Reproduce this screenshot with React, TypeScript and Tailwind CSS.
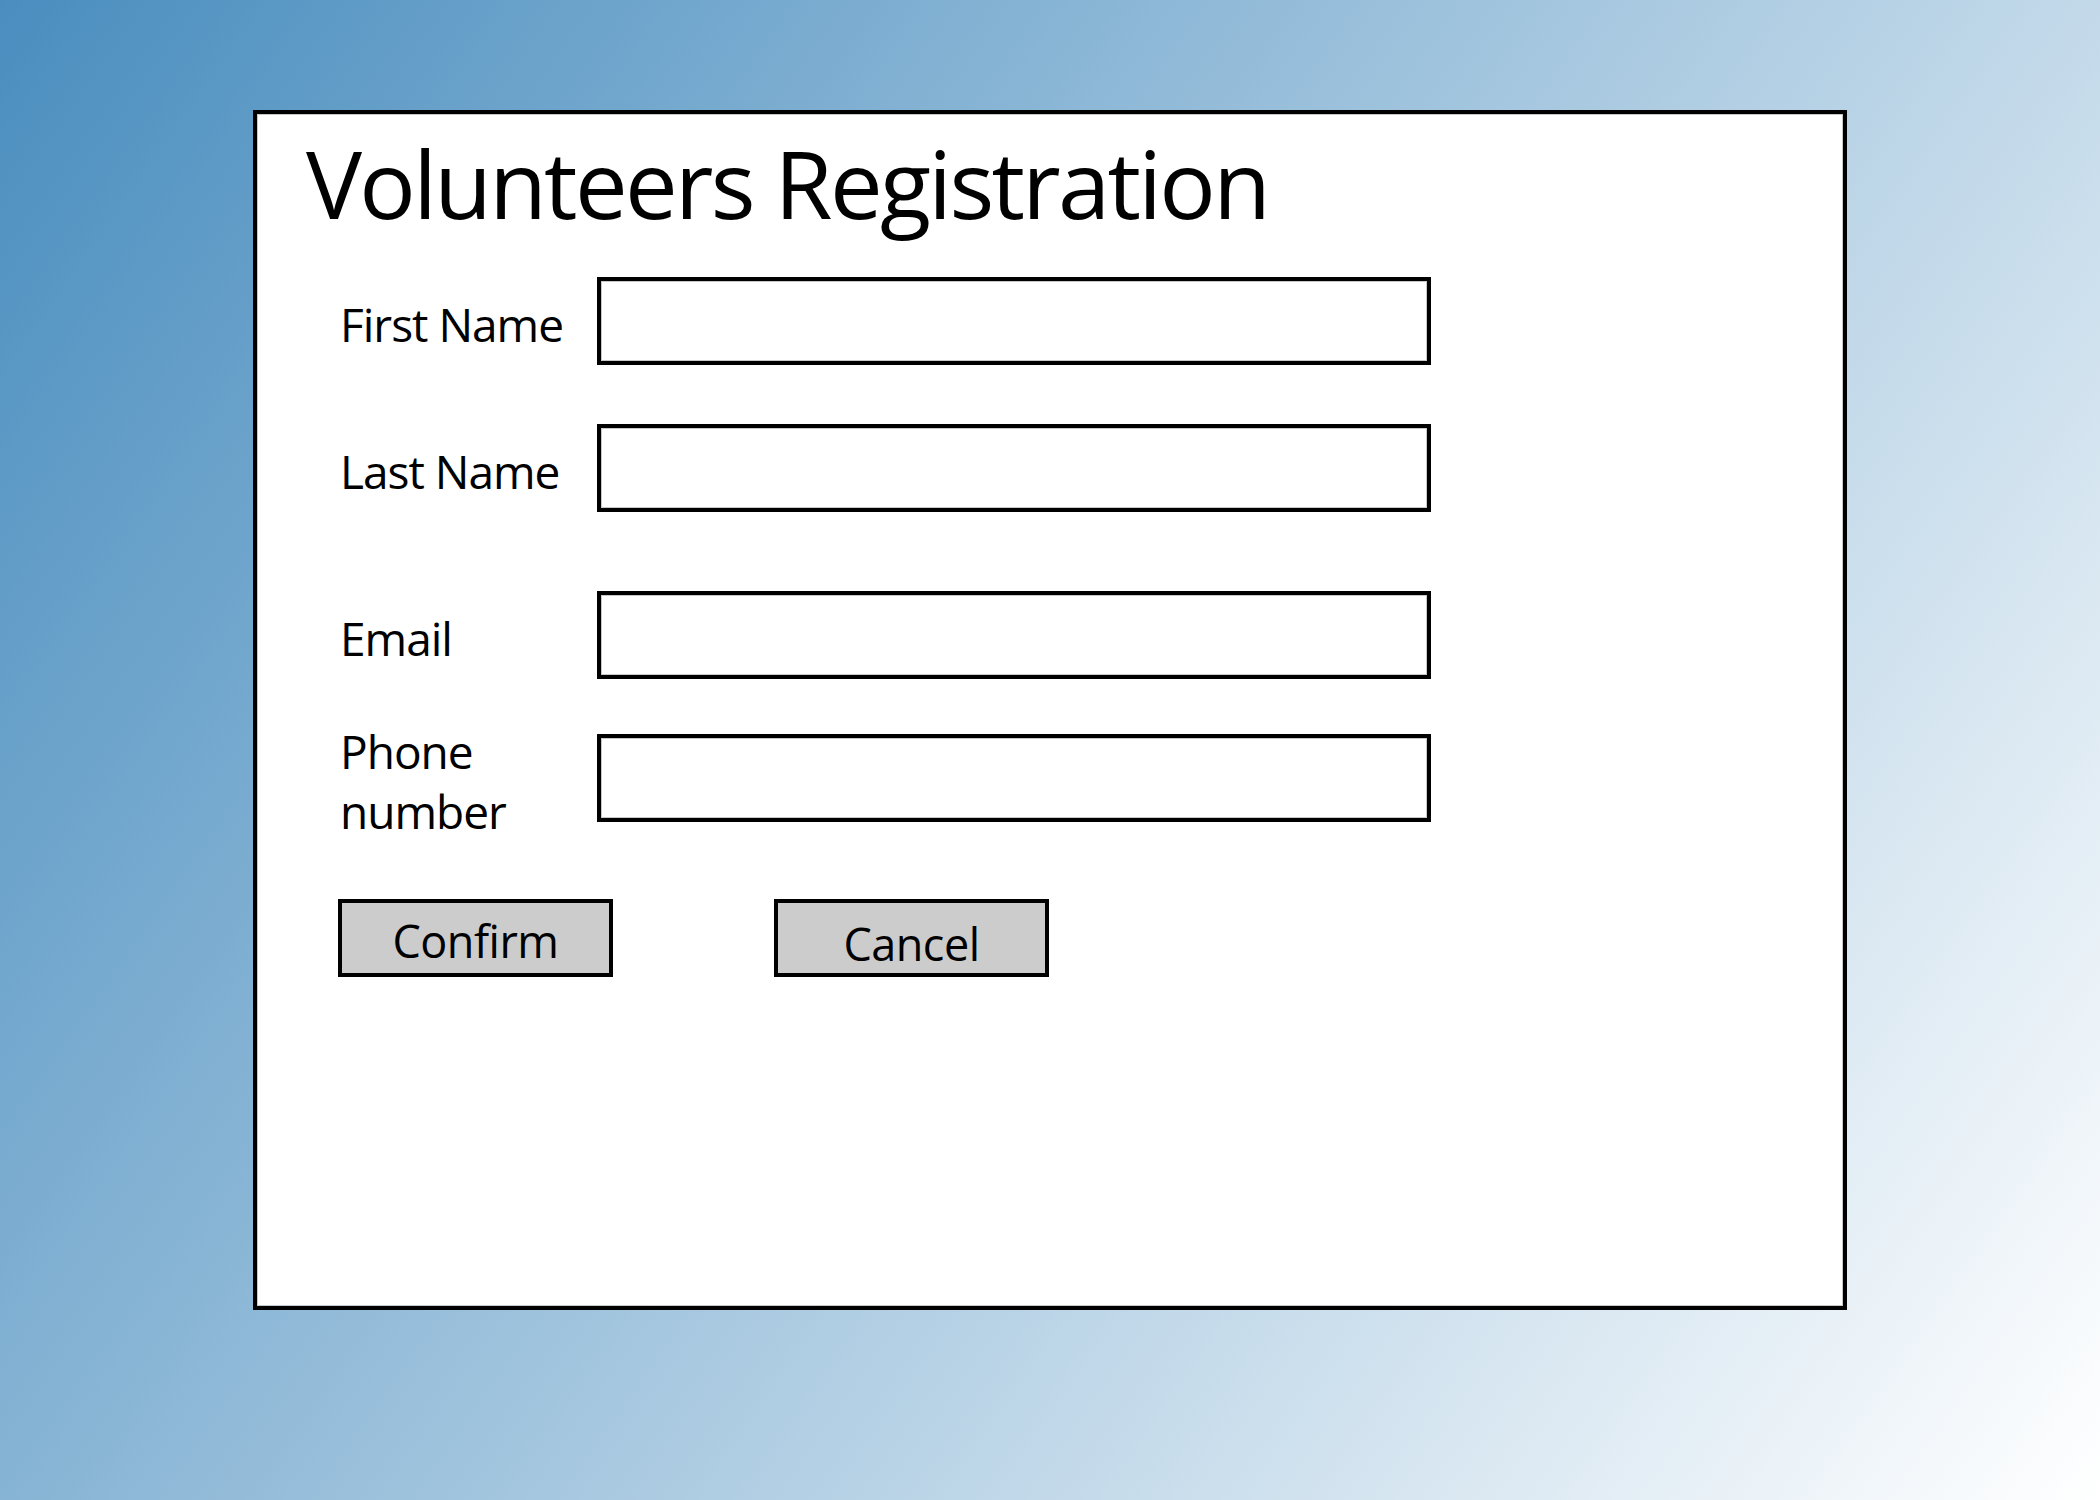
import React from 'react';

const fields = [
  { label: 'First Name', rowClass: 'mt-[48px]' },
  { label: 'Last Name', rowClass: 'mt-[59px]' },
  { label: 'Email', rowClass: 'mt-[79px]' },
  { label: 'Phone\nnumber', rowClass: 'mt-[39px]' },
];

export default function App() {
  return (
    <div className="min-h-screen w-full bg-[linear-gradient(125deg,#4a8ebf,#ffffff)] pl-[253px] pt-[110px] font-['Open_Sans',sans-serif] text-black">
      {/* Registration card */}
      <div className="h-[1200px] w-[1594px] border-4 border-black bg-white pl-[49px] pt-[23px] shadow-[inset_0_0_0_1px_#c8c8c8]">
        <h1 className="text-[94px] leading-[92px] tracking-[-2.7px] font-normal">Volunteers Registration</h1>

        <form className="-ml-[49px] pl-[81px]" onSubmit={(e) => e.preventDefault()}>
          {fields.map((f) => (
            <div key={f.label} className={`flex items-center ${f.rowClass}`}>
              <label className="w-[259px] translate-y-[3px] whitespace-pre-line pl-[2px] text-[46px] leading-[60px] tracking-[-1px]">
                {f.label}
              </label>
              <input
                type="text"
                className="h-[88px] w-[834px] border-4 border-black bg-white shadow-[inset_0_0_0_1px_#c8c8c8] outline-none"
              />
            </div>
          ))}

          {/* Buttons */}
          <div className="mt-[61px] flex gap-[161px]">
            <button
              type="submit"
              className="flex h-[78px] w-[275px] items-center justify-center border-4 border-black bg-[#cccccc] pt-[5px] text-[45px] leading-[60px] tracking-[-0.5px]"
            >
              Confirm
            </button>
            <button
              type="button"
              className="flex h-[78px] w-[275px] items-center justify-center border-4 border-black bg-[#cccccc] pt-[12px] text-[45px] leading-[60px] tracking-[-0.5px]"
            >
              Cancel
            </button>
          </div>
        </form>
      </div>
    </div>
  );
}
